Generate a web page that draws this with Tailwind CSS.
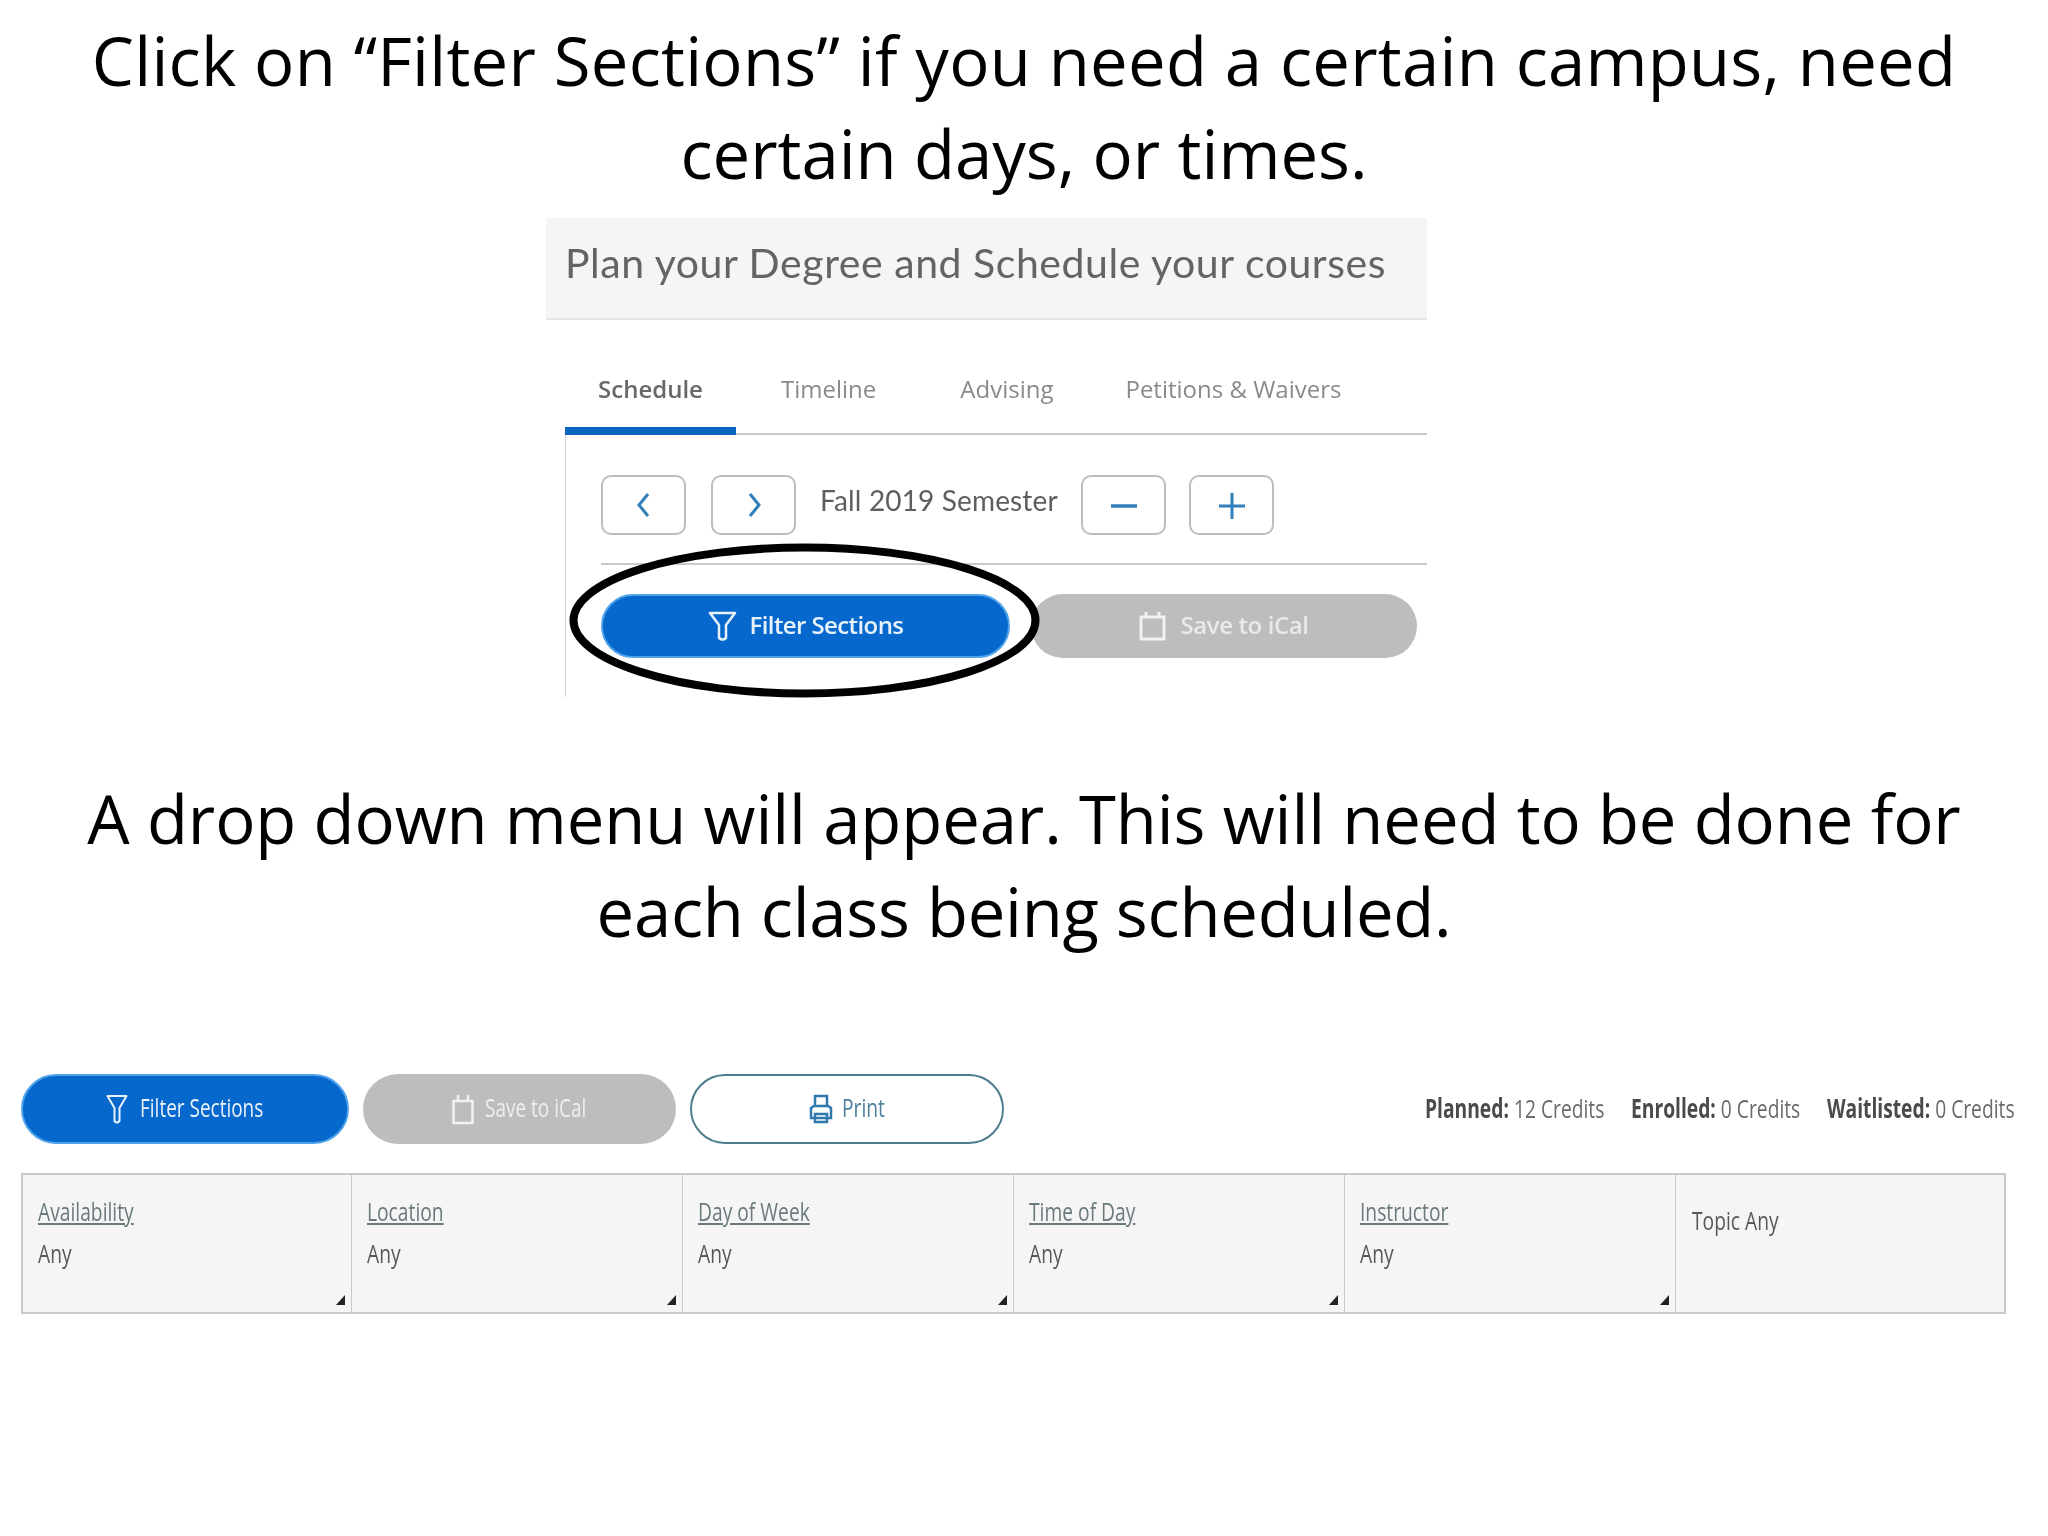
<!DOCTYPE html>
<html lang="en">
<head>
    <meta charset="UTF-8">
    <title>Filter Sections</title>
    <script src="https://cdn.jsdelivr.net/npm/@tailwindcss/browser@4"></script>
</head>
<body class="bg-white">
    <div class="w-[2048px] h-[1536px] overflow-hidden bg-white font-['Open_Sans',sans-serif]">

        <!-- first heading -->
        <h1 class="pt-[14px] text-center text-[67px] leading-[93px] text-black"><span class="tracking-[0.26px]">Click on “Filter Sections” if you need a certain campus, need</span><br>certain days, or times.</h1>

        <!-- first screenshot -->
        <div class="relative mt-[18px] ml-[546px] w-[881px] h-[486px]">
            <div class="blur-[0.5px] h-[102px] pl-[19px] pb-[11px] flex items-center bg-[#f5f5f5] border-b-2 border-[#e6e6e6]">
                <p class="font-['Lato',sans-serif] text-[41px] tracking-[0.55px] text-[#646466]">Plan your Degree and Schedule your courses</p>
            </div>

            <div class="blur-[0.5px] ml-[19px] h-[115px] flex border-b-2 border-[#c9c9cb] text-[24px] text-[#8a8a8c]">
                <div class="w-[171px] h-[115px] border-b-[8px] border-[#0a66bd] flex justify-center pt-[50px] font-semibold text-[#68686a] leading-[38px]">Schedule</div>
                <div class="pt-[50px] leading-[38px] ml-[45px]">Timeline</div>
                <div class="pt-[50px] leading-[38px] ml-[84px]">Advising</div>
                <div class="pt-[50px] leading-[38px] ml-[72px]">Petitions &amp; Waivers</div>
            </div>

            <div class="ml-[19px] h-[262px] border-l border-[#d6d6d6] pl-[35px]">
                <div class="blur-[0.5px] h-[130px] pt-[40px] border-b-2 border-[#c9c9cb] flex items-start">
                    <button class="w-[85px] h-[60px] rounded-[10px] border-2 border-[#bdbdbf] flex items-center justify-center">
                        <svg class="w-[22px] h-[30px]" viewBox="0 0 22 30" fill="none" stroke="#2f7fb8" stroke-width="3"><path d="M15 4 6 15l9 11"/></svg>
                    </button>
                    <button class="ml-[25px] w-[85px] h-[60px] rounded-[10px] border-2 border-[#bdbdbf] flex items-center justify-center">
                        <svg class="w-[22px] h-[30px]" viewBox="0 0 22 30" fill="none" stroke="#2f7fb8" stroke-width="3"><path d="m7 4 9 11-9 11"/></svg>
                    </button>
                    <p class="ml-[24px] w-[261px] mt-[6px] font-['Lato',sans-serif] text-[28px] tracking-[0.15px] leading-[38px] text-[#5e5e60] whitespace-nowrap">Fall 2019 Semester</p>
                    <button class="w-[85px] h-[60px] rounded-[10px] border-2 border-[#bdbdbf] flex items-center justify-center">
                        <svg class="w-[28px] h-[28px]" viewBox="0 0 28 28" fill="none" stroke="#2f7fb8" stroke-width="3.5"><path d="M1 15h26"/></svg>
                    </button>
                    <button class="ml-[23px] w-[85px] h-[60px] rounded-[10px] border-2 border-[#bdbdbf] flex items-center justify-center">
                        <svg class="w-[28px] h-[28px]" viewBox="0 0 28 28" fill="none" stroke="#2f7fb8" stroke-width="3"><path d="M1 15h26M14 2v26"/></svg>
                    </button>
                </div>
                <div class="blur-[0.5px] mt-[29px] flex gap-[21px]">
                    <button class="w-[409px] h-[64px] rounded-full bg-[#0668cc] border-2 border-[#4fa3ea] flex items-center justify-center gap-[13px] text-[24px] font-semibold text-[#e8f2fb]">
                        <svg class="w-[29px] h-[30px]" viewBox="0 0 29 30" fill="none" stroke="#e8f2fb" stroke-width="2.5" stroke-linejoin="round"><path d="M2 2h25L18 14v13q-3.500 3-7 0V14z"/></svg>
                        <span class="mb-[2px] tracking-[-0.6px]">Filter Sections</span>
                    </button>
                    <button class="w-[386px] h-[64px] rounded-full bg-[#bdbdbf] flex items-center justify-center gap-[14px] text-[24px] font-semibold text-[#e9e9ea]">
                        <svg class="w-[27px] h-[30px]" viewBox="0 0 27 30" fill="none" stroke="#f2f2f3" stroke-width="3"><path d="M2 6h23v22H2zM7 1v6M20 1v6"/></svg>
                        <span class="mb-[2px] tracking-[-0.4px]">Save to iCal</span>
                    </button>
                </div>
            </div>

            <!-- hand drawn circle -->
            <svg class="absolute left-[23px] top-[325px] w-[471px] h-[155px]" viewBox="0 0 471 155" fill="none">
                <ellipse cx="235.500" cy="77.500" rx="231" ry="73" stroke="#000" stroke-width="8"/>
            </svg>
        </div>

        <!-- second heading -->
        <h1 class="mt-[68px] text-center text-[67px] leading-[93px] text-black"><span class="tracking-[-0.09px]">A drop down menu will appear. This will need to be done for</span><br><span class="tracking-[-0.24px]">each class being scheduled.</span></h1>

        <!-- second screenshot -->
        <div class="blur-[0.5px] mt-[116px] px-[21px]">
            <div class="flex items-center h-[70px]">
                <button class="w-[328px] h-[70px] rounded-full bg-[#0668cc] border-2 border-[#4fa3ea] flex items-center justify-center gap-[12px] text-[#e8f2fb]">
                    <svg class="w-[22px] h-[30px]" viewBox="0 0 22 30" fill="none" stroke="#e8f2fb" stroke-width="2" stroke-linejoin="round"><path d="M1.500 2h19L13.500 14v13q-2.500 3-5 0V14z"/></svg>
                    <span class="mb-[5px] w-[124px] text-[26px] font-medium leading-[28px] whitespace-nowrap origin-left scale-x-[.73] text-left">Filter Sections</span>
                </button>
                <button class="ml-[14px] w-[313px] h-[70px] rounded-full bg-[#bdbdbf] flex items-center justify-center gap-[11px] text-[#eeeeef]">
                    <svg class="w-[22px] h-[31px]" viewBox="0 0 22 31" fill="none" stroke="#f2f2f3" stroke-width="2.500"><path d="M1.500 7h19v22h-19zM6 1v6M16 1v6"/></svg>
                    <span class="mb-[5px] w-[103px] text-[26px] font-medium leading-[28px] whitespace-nowrap origin-left scale-x-[.73] text-left">Save to iCal</span>
                </button>
                <button class="ml-[14px] w-[314px] h-[70px] rounded-full bg-white border-2 border-[#4d7c8c] flex items-center justify-center gap-[9px] text-[#4b7f9c]">
                    <svg class="w-[24px] h-[30px]" viewBox="0 0 24 30" fill="none" stroke="#2f79ad" stroke-width="2.500"><path d="M6 12V2h12v10M2 24V14l3-2h14l3 2v10zM6 20h12v8H6z"/></svg>
                    <span class="mb-[5px] w-[43px] text-[26px] leading-[28px] whitespace-nowrap origin-left scale-x-[.74] text-left">Print</span>
                </button>
                <div class="ml-auto mr-[12px] mb-[2px] flex gap-[27px] text-[26px] leading-[30px] text-[#6a6a6c] whitespace-nowrap">
                    <p class="w-[179px]"><span class="inline-block origin-left scale-x-[.74]"><b class="font-bold text-[#4a4a4c]">Planned:</b> 12 Credits</span></p>
                    <p class="w-[169px]"><span class="inline-block origin-left scale-x-[.74]"><b class="font-bold text-[#4a4a4c]">Enrolled:</b> 0 Credits</span></p>
                    <p class="w-[188px]"><span class="inline-block origin-left scale-x-[.74]"><b class="font-bold text-[#4a4a4c]">Waitlisted:</b> 0 Credits</span></p>
                </div>
            </div>

            <div class="mt-[29px] w-[1985px] h-[141px] grid grid-cols-[328.5px_repeat(4,331px)_1fr] bg-[#f5f5f6] border-2 border-[#c9c9cb] text-[26px] leading-[32px] text-[#58585a]">
                <div class="relative pl-[15px] pt-[20px] border-r border-[#c9c9cb]">
                    <a class="block w-max underline origin-left scale-x-[.74] text-[#6a7a7c]">Availability</a>
                    <p class="mt-[10px] origin-left scale-x-[.74]">Any</p>
                    <svg class="absolute right-[6px] bottom-[7px] w-[9px] h-[10px]" viewBox="0 0 9 10"><path d="M9 0v10H0z" fill="#222"/></svg>
                </div>
                <div class="relative pl-[15px] pt-[20px] border-r border-[#c9c9cb]">
                    <a class="block w-max underline origin-left scale-x-[.74] text-[#6a7a7c]">Location</a>
                    <p class="mt-[10px] origin-left scale-x-[.74]">Any</p>
                    <svg class="absolute right-[6px] bottom-[7px] w-[9px] h-[10px]" viewBox="0 0 9 10"><path d="M9 0v10H0z" fill="#222"/></svg>
                </div>
                <div class="relative pl-[15px] pt-[20px] border-r border-[#c9c9cb]">
                    <a class="block w-max underline origin-left scale-x-[.74] text-[#6a7a7c]">Day of Week</a>
                    <p class="mt-[10px] origin-left scale-x-[.74]">Any</p>
                    <svg class="absolute right-[6px] bottom-[7px] w-[9px] h-[10px]" viewBox="0 0 9 10"><path d="M9 0v10H0z" fill="#222"/></svg>
                </div>
                <div class="relative pl-[15px] pt-[20px] border-r border-[#c9c9cb]">
                    <a class="block w-max underline origin-left scale-x-[.74] text-[#6a7a7c]">Time of Day</a>
                    <p class="mt-[10px] origin-left scale-x-[.74]">Any</p>
                    <svg class="absolute right-[6px] bottom-[7px] w-[9px] h-[10px]" viewBox="0 0 9 10"><path d="M9 0v10H0z" fill="#222"/></svg>
                </div>
                <div class="relative pl-[15px] pt-[20px] border-r border-[#c9c9cb]">
                    <a class="block w-max underline origin-left scale-x-[.74] text-[#6a7a7c]">Instructor</a>
                    <p class="mt-[10px] origin-left scale-x-[.74]">Any</p>
                    <svg class="absolute right-[6px] bottom-[7px] w-[9px] h-[10px]" viewBox="0 0 9 10"><path d="M9 0v10H0z" fill="#222"/></svg>
                </div>
                <div class="pl-[16px] pt-[29px]">
                    <p class="origin-left scale-x-[.74]">Topic Any</p>
                </div>
            </div>
        </div>
    </div>
</body>
</html>
